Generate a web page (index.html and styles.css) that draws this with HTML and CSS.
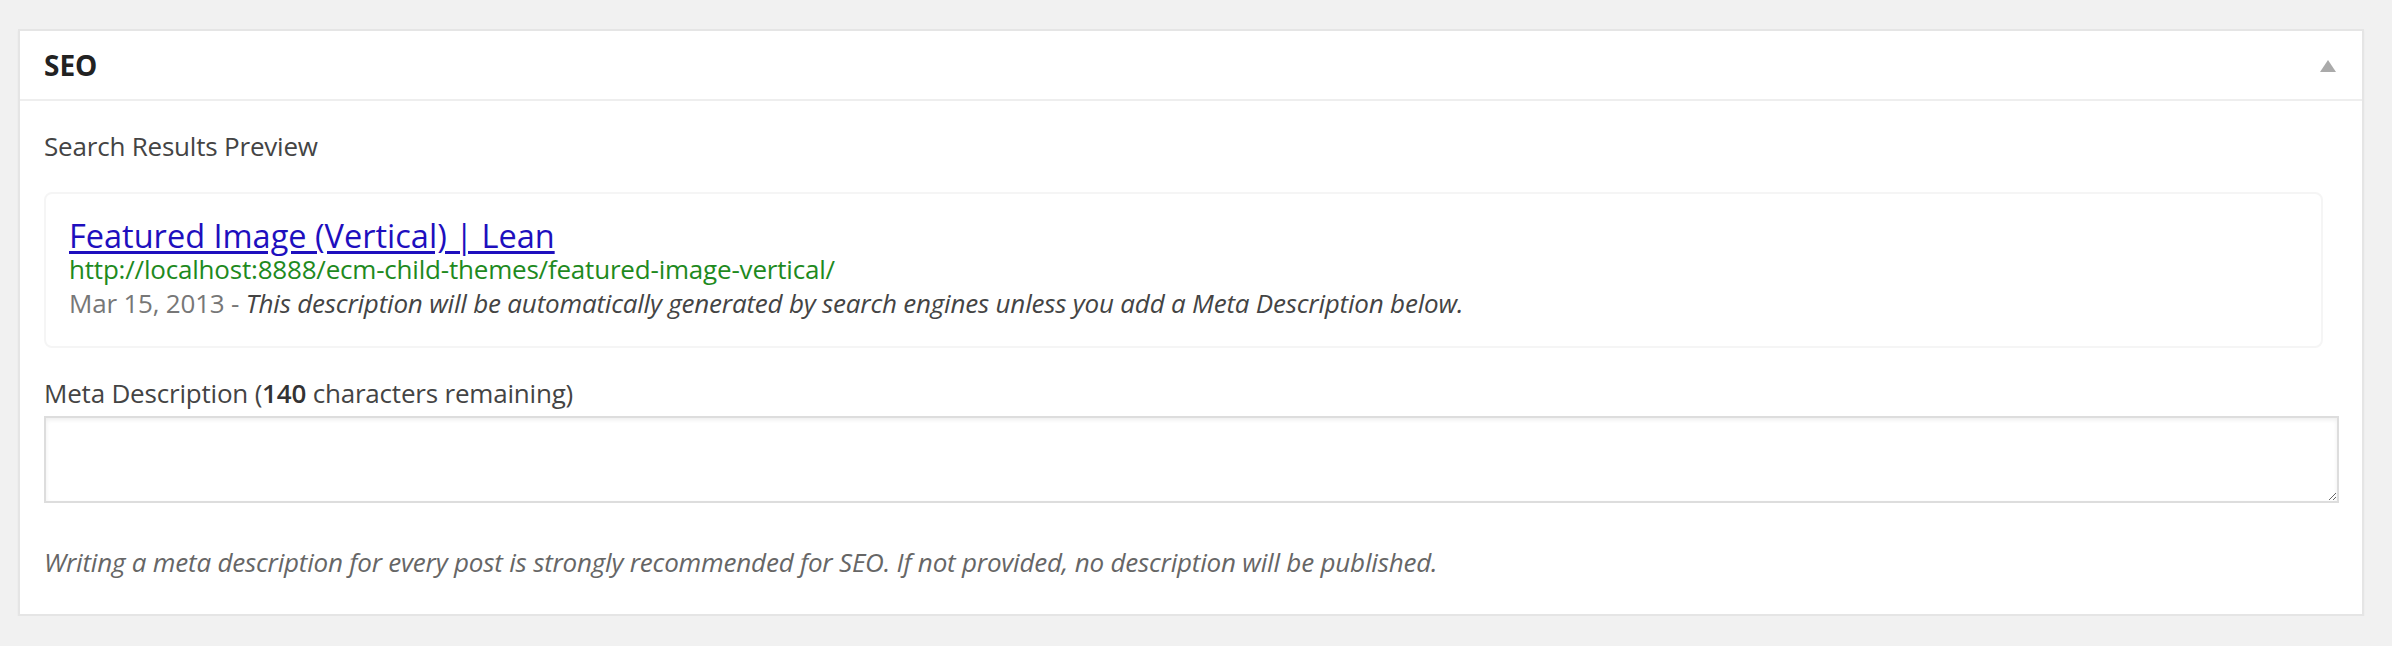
FILE: index.html
```html
<!DOCTYPE html>
<html lang="en">
<head>
<meta charset="utf-8">
<title>SEO</title>
<link rel="stylesheet" href="styles.css">
</head>
<body>
<div class="page">
  <div class="postbox">
    <div class="postbox-header">
      <h3 class="postbox-title">SEO</h3>
      <span class="toggle-arrow" aria-hidden="true"></span>
    </div>
    <div class="inside">
      <p class="section-label">Search Results Preview</p>
      <div class="serp-preview">
        <a class="serp-title" href="#">Featured Image (Vertical) | Lean</a>
        <div class="serp-url">http://localhost:8888/ecm-child-themes/featured-image-vertical/</div>
        <div class="serp-desc"><span class="serp-date">Mar 15, 2013 -</span> <em>This description will be automatically generated by search engines unless you add a Meta Description below.</em></div>
      </div>
      <label class="field-label" for="metadesc">Meta Description (<strong>140</strong> characters remaining)</label>
      <textarea id="metadesc" class="meta-textarea"></textarea>
      <p class="field-note">Writing a meta description for every post is strongly recommended for SEO. If not provided, no description will be published.</p>
    </div>
  </div>
</div>
</body>
</html>
```
FILE: styles.css
```css
html, body {
  margin: 0;
  padding: 0;
  background: #f1f1f1;
}
body {
  font-family: "Open Sans", "Liberation Sans", sans-serif;
  color: #444;
  font-size: 26px;
  letter-spacing: -0.2px;
}
.page {
  padding: 29px 28px 0 18px;
}
.postbox {
  background: #fff;
  border: 2px solid #e5e5e5;
  box-shadow: 0 2px 2px rgba(0, 0, 0, 0.04);
}
.postbox-header {
  display: flex;
  align-items: center;
  justify-content: space-between;
  padding: 16px 26px 16px 24px;
  border-bottom: 2px solid #eeeeee;
}
.postbox-title {
  margin: 0;
  font-size: 28px;
  line-height: 36px;
  font-weight: 700;
  color: #222;
  letter-spacing: 0;
}
.toggle-arrow {
  width: 0;
  height: 0;
  border-left: 8px solid transparent;
  border-right: 8px solid transparent;
  border-bottom: 12px solid #aaaaaa;
  margin-top: 2px;
}
.inside {
  display: flex;
  flex-direction: column;
  align-items: stretch;
  padding: 27px 23px 34px 24px;
}
.section-label {
  margin: 0;
  line-height: 36px;
  color: #444;
}
.serp-preview {
  margin: 28px 16px 0 0;
  border: 2px solid #f5f5f5;
  border-radius: 8px;
  padding: 25px 20px 26px 23px;
  display: flex;
  flex-direction: column;
  align-items: flex-start;
}
.serp-title {
  font-size: 32.5px;
  line-height: 33px;
  letter-spacing: 0;
  color: #1e0fbe;
  text-decoration: underline;
  text-underline-offset: 3px;
}
.serp-url {
  color: #1e8a1e;
  line-height: 34px;
}
.serp-desc {
  line-height: 34px;
  color: #444;
}
.serp-date {
  color: #777;
}
.serp-desc em {
  font-style: italic;
  color: #444;
}
.field-label {
  margin-top: 27px;
  line-height: 36px;
  color: #444;
}
.field-label strong {
  font-weight: 600;
  color: #333;
}
.meta-textarea {
  margin-top: 5px;
  height: 87px;
  box-sizing: border-box;
  border: 2px solid #dddddd;
  box-shadow: inset 0 2px 4px rgba(0, 0, 0, 0.07);
  font-family: inherit;
  font-size: 26px;
  padding: 4px 8px;
  background: #fff;
  outline: none;
}
.field-note {
  margin: 41px 0 0 0;
  line-height: 36px;
  font-style: italic;
  color: #666;
}
```
